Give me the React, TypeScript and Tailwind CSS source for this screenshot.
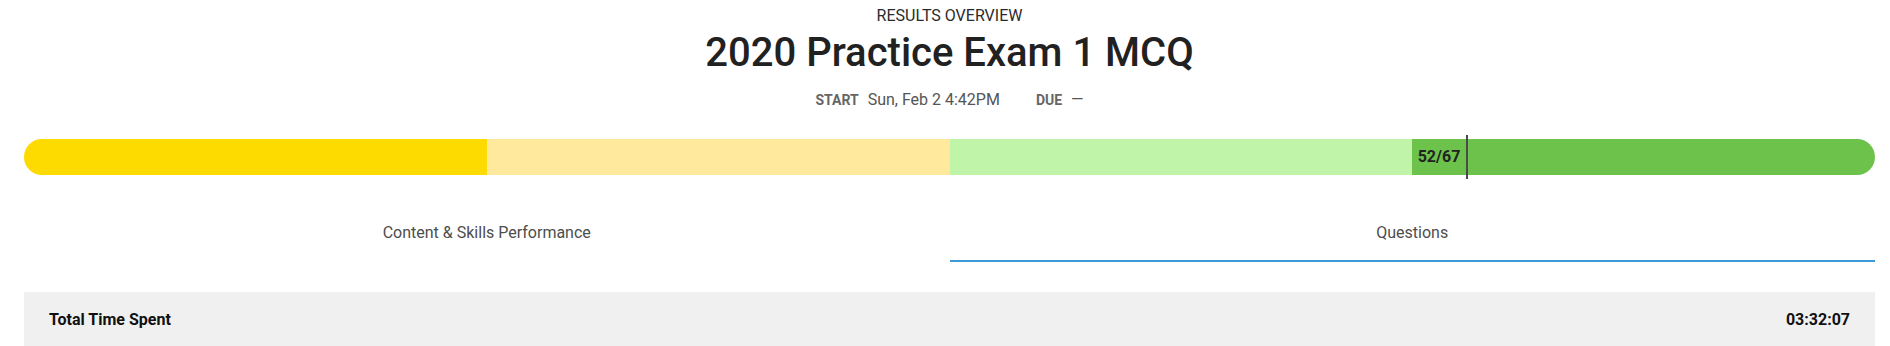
import React from "react";

export default function App() {
  return (
    <div className="w-[1890px] h-[346px] overflow-hidden bg-white font-['Roboto',sans-serif]">
      <div className="ml-[24px] w-[1851px]">
        <div className="flex flex-col items-center pt-[4px]">
          <div className="text-[16px] leading-[24px] text-[#2b2b2b] uppercase">Results Overview</div>
          <h1 className="mt-[1px] text-[40px] leading-[48px] font-medium text-[#212121]">2020 Practice Exam 1 MCQ</h1>
          <div className="mt-[11px] flex items-baseline leading-[24px]">
            <span className="text-[14px] font-bold text-[#666666] uppercase">Start</span>
            <span className="ml-[9px] text-[16px] text-[#555555]">Sun, Feb 2 4:42PM</span>
            <span className="ml-[36px] text-[14px] font-bold text-[#666666] uppercase">Due</span>
            <span className="ml-[9px] text-[16px] text-[#555555]">—</span>
          </div>
        </div>

        <div className="relative mt-[27px]">
          <div className="grid grid-cols-4 h-[36px] rounded-full overflow-hidden">
            <div className="bg-[#fdda00]" />
            <div className="bg-[#ffe99c]" />
            <div className="bg-[#c0f4a8]" />
            <div className="bg-[#6cc24a]" />
          </div>
          <div className="absolute left-[1389px] top-0 h-[36px] w-[52px] flex items-center justify-center text-[16px] font-bold text-[#222222]">
            52/67
          </div>
          <div className="absolute left-[1442px] top-[-4px] h-[44px] w-[2px] bg-[#4a4a4a]" />
        </div>

        <div className="mt-[37px] grid grid-cols-2">
          <div className="pt-[9px] pb-[17px] text-center text-[16px] leading-[24px] text-[#4d4d4d]">
            Content &amp; Skills Performance
          </div>
          <div className="pt-[9px] pb-[15px] text-center text-[16px] leading-[24px] text-[#4d4d4d] border-b-2 border-[#3d9ad8]">
            Questions
          </div>
        </div>

        <div className="mt-[30px] bg-[#f0f0f0] px-[25px] py-[16px] flex justify-between text-[16px] leading-[24px] font-bold text-[#111111]">
          <span>Total Time Spent</span>
          <span>03:32:07</span>
        </div>
      </div>
    </div>
  );
}
